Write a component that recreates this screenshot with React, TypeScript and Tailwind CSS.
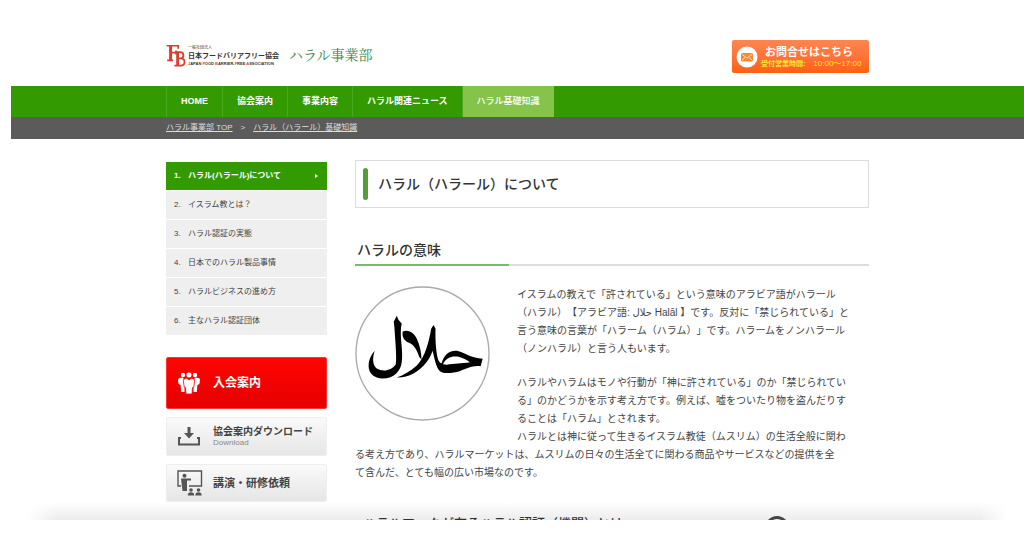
import React from "react";

const navItems = [
  { label: "HOME", active: false },
  { label: "協会案内", active: false },
  { label: "事業内容", active: false },
  { label: "ハラル関連ニュース", active: false },
  { label: "ハラル基礎知識", active: true },
];

const sideItems = [
  "ハラル(ハラール)について",
  "イスラム教とは？",
  "ハラル認証の実態",
  "日本でのハラル製品事情",
  "ハラルビジネスの進め方",
  "主なハラル認証団体",
];

function Initial({ children }: { children: React.ReactNode }) {
  return <span className="text-[#e0402c]">{children}</span>;
}

function Logo() {
  return (
    <a href="#" className="flex items-center text-[#333]">
      <svg viewBox="0 0 20 24" className="h-6 w-5" aria-hidden="true">
        <g fill="none" stroke="#d9402c">
          <path strokeWidth="3" d="M4.6 2v14" />
          <path strokeWidth="1.6" d="M.6 1.8h11.6v3M1.2 16.4h6M5 8.6h5M10 6.6v4" />
          <path strokeWidth="2.8" d="M11.6 8.6v13" />
          <path
            strokeWidth="1.8"
            d="M9 8.2h5.4c4 0 4 6 0 6.2h-3 3.400c5 0 5 7 0 7.200H8.400"
          />
        </g>
      </svg>
      <span className="ml-0.5 flex flex-col">
        <span className="text-[4px] leading-[5px]">一般社団法人</span>
        <span className="text-[7px] leading-[11px] font-bold whitespace-nowrap">
          日本フードバリアフリー協会
        </span>
        <span className="text-[4px] leading-[6px] font-bold whitespace-nowrap">
          <Initial>J</Initial>APAN <Initial>F</Initial>OOD <Initial>B</Initial>ARRIER-
          <Initial>F</Initial>REE <Initial>A</Initial>SSOCIATION
        </span>
      </span>
    </a>
  );
}

function PeopleIcon() {
  return (
    <svg viewBox="0 0 24 24" className="size-6" fill="#fff" aria-hidden="true">
      <circle cx="6" cy="4" r="2.200" />
      <circle cx="18" cy="4" r="2.200" />
      <path d="M1 9c0-2 2-2.600 5-2.600l1.500 4V21H4.200L3.600 14 1.600 13zM23 9c0-2-2-2.600-5-2.600l-1.500 4V21h3.300l.6-7 2-1z" />
      <g stroke="#f00" strokeWidth=".8">
        <circle cx="12" cy="4" r="3" />
        <path d="M6.400 10c0-2 2-2.800 3.400-2.800L12 9l2.200-1.800c1.400 0 3.400.8 3.400 2.800l-.8 6-1.300.6-.5 6.400H9l-.5-6.400-1.300-.6z" />
      </g>
    </svg>
  );
}

function DownloadIcon() {
  return (
    <svg viewBox="0 0 24 24" className="size-6" aria-hidden="true">
      <path d="M10.500 2h3v6H17l-5 5.500L7 8h3.500z" fill="#555" />
      <path d="M4 13H2v6.500h20V13h-2" fill="none" stroke="#555" strokeWidth="2" />
    </svg>
  );
}

function LectureIcon() {
  return (
    <svg viewBox="0 0 26 28" className="h-7 w-[26px]" fill="#555" aria-hidden="true">
      <path d="M4 17H1V2h23.500v15H12" fill="none" stroke="#555" strokeWidth="1.400" />
      <circle cx="7.500" cy="6.800" r="2" />
      <path d="M4 9.500h10v2H10V22H5.500z" />
      <circle cx="14" cy="21" r="1.800" />
      <circle cx="21.500" cy="21" r="1.800" />
      <path d="M10.800 26.500c0-2.500 1-3.200 3.200-3.200s3.200.7 3.200 3.200zM18.300 26.500c0-2.500 1-3.200 3.200-3.200s3.200.7 3.200 3.200z" />
    </svg>
  );
}

function HalalMark() {
  return (
    <svg
      viewBox="30 32 404 404"
      className="float-left mr-[27px] mb-3 size-[135px]"
      role="img"
      aria-label="حلال"
    >
      <circle cx="232" cy="234" r="199" fill="#fff" stroke="#aaa" strokeWidth="4" />
      <path d="M155 121 160 133 170 145C166 158 167 180 169 205C173 248 173 275 155 292C135 313 95 315 78 294C65 277 70 247 89 226C82 248 82 268 95 279C114 290 140 285 152 266C156 250 150 190 148 156L146 139Z" />
      <path d="M173 168C188 162 206 170 215 190C224 210 229 230 229 253L222 244C216 225 208 208 190 201C176 195 170 182 173 168Z" />
      <path
        fillRule="evenodd"
        d="M155 306C175 299 196 287 215 270C240 246 252 195 258 160L265 149 271 160C270 190 272 225 278 250C282 262 287 265 290 262C296 240 310 224 335 226C355 231 380 248 412 250L406 272C380 269 365 279 345 286C320 294 295 295 284 287C272 276 268 248 262 226C255 250 235 278 205 294C190 302 170 307 155 306ZM293 266C302 247 320 240 340 244C352 247 365 254 374 260C350 265 325 262 305 268Z"
      />
    </svg>
  );
}

export default function App() {
  return (
    <div className="bg-white pl-[11px] font-['Liberation_Sans','Noto_Sans_CJK_JP',sans-serif] text-[#444] [text-spacing-trim:space-all]">
      <header>
        <div className="mx-auto flex w-full max-w-[703px] items-start justify-between pt-10 pb-[13px]">
          <div className="flex items-center gap-2.5 pt-1">
            <Logo />
            <span className="font-['Liberation_Serif','Noto_Serif_CJK_JP','Noto_Sans_CJK_JP',serif] text-[14px] leading-6 text-[#3c8550]">
              ハラル事業部
            </span>
          </div>
          <a
            href="#"
            className="flex h-[33px] w-[137px] items-center gap-[3px] rounded-[2px] bg-linear-to-b from-[#ff8550] to-[#ff6010] pl-1 text-white"
          >
            <svg viewBox="0 0 22 22" className="size-[22px] shrink-0" aria-hidden="true">
              <circle cx="11" cy="11" r="10.500" fill="#fff" />
              <rect x="5" y="7" width="12" height="8.500" rx="1.500" fill="#f58a35" />
              <path d="m6 8.500 5 3.500 5-3.500M6 14l3-2.500M16 14l-3-2.500" fill="none" stroke="#ffe3c8" />
            </svg>
            <span className="flex flex-col whitespace-nowrap">
              <span className="pl-1 text-[11px] leading-[14px] font-bold">お問合せはこちら</span>
              <span className="flex gap-2 text-[#ffe633]">
                <span className="text-[7px] leading-[10px] font-bold">受付営業時間:</span>
                <span className="text-[8px] leading-[10px]">10:00〜17:00</span>
              </span>
            </span>
          </a>
        </div>
      </header>

      <nav className="bg-[#339a02]">
        <ul className="mx-auto flex w-full max-w-[703px]">
          {navItems.map((item) => (
            <li key={item.label} className="border-l border-[#4aa81e]">
              <a
                href="#"
                className={
                  item.active
                    ? "block bg-[#86c34b] px-3.5 text-[9px] leading-[31px] font-medium text-white"
                    : "block px-3.5 text-[9px] leading-[31px] font-bold text-white"
                }
              >
                {item.label}
              </a>
            </li>
          ))}
        </ul>
      </nav>

      <div className="bg-[#5b5b5b]">
        <div className="mx-auto flex w-full max-w-[703px] gap-2 text-[8px] leading-[22px] text-[#ddd]">
          <a href="#" className="underline">ハラル事業部 TOP</a>
          <span>&gt;</span>
          <a href="#" className="underline">ハラル（ハラール）基礎知識</a>
        </div>
      </div>

      <div className="relative">
        <div className="absolute inset-x-4 bottom-0 h-[18px] bg-linear-to-b from-white to-[#ececec] mask-x-from-97%" />
        <div className="relative mx-auto flex w-full max-w-[703px] gap-[28px] pt-[21px]">
          <aside className="w-[161px] shrink-0 pt-0.5">
            <ul className="flex flex-col gap-px text-[8px] leading-7">
              {sideItems.map((item, i) => (
                <li key={item}>
                  <a
                    href="#"
                    className={
                      i === 0
                        ? "flex bg-[#339a02] px-2 font-bold text-white"
                        : "flex bg-[#efefef] px-2"
                    }
                  >
                    <span className="w-3.5">{i + 1}.</span>
                    <span className="grow">{item}</span>
                    {i === 0 && (
                      <svg viewBox="0 0 4 6" className="mt-[11px] h-1.5 w-1" aria-hidden="true">
                        <path d="M0 1l3 2-3 2z" fill="#fff" />
                      </svg>
                    )}
                  </a>
                </li>
              ))}
            </ul>
            <div className="mt-[22px] flex flex-col gap-2 font-bold">
              <a
                href="#"
                className="flex h-[52px] items-center gap-3 rounded-[2px] border border-[#f33] bg-linear-to-b from-[#ff0500] to-[#e60000] pl-2.5 text-[12px] text-white"
              >
                <PeopleIcon />
                入会案内
              </a>
              <a
                href="#"
                className="flex h-[39px] items-center gap-3 rounded-[2px] border border-[#eee] bg-linear-to-b from-[#fafafa] to-[#e6e6e6] pl-2.5"
              >
                <DownloadIcon />
                <span className="flex flex-col">
                  <span className="text-[10px] leading-3">協会案内ダウンロード</span>
                  <span className="text-[8px] leading-[9px] font-normal text-[#888]">Download</span>
                </span>
              </a>
              <a
                href="#"
                className="flex h-[38px] items-center gap-2.5 rounded-[2px] border border-[#eee] bg-linear-to-b from-[#fafafa] to-[#e6e6e6] pl-2.5 text-[11px]"
              >
                <LectureIcon />
                講演・研修依頼
              </a>
            </div>
          </aside>

          <main className="min-w-0 grow">
            <div className="flex h-12 items-center gap-2.5 border border-[#ddd] pl-[7px]">
              <span className="h-8 w-[5px] rounded-full bg-[#549d38]" />
              <h1 className="text-[14px] leading-5 font-medium text-[#333]">
                ハラル（ハラール）について
              </h1>
            </div>
            <h2 className="mt-[30px] mb-0.5 pl-0.5 text-[14px] leading-6 font-medium text-[#333]">
              ハラルの意味
            </h2>
            <div className="flex h-0.5 bg-[#ddd]">
              <span className="w-[30%] bg-[#76bd69]" />
            </div>
            <div className="pt-5 text-[10px] leading-[18px]">
              <HalalMark />
              <p>
                イスラムの教えで「許されている」という意味のアラビア語がハラール
                <br />
                （ハラル）【アラビア語: <span lang="ar" className="font-['DejaVu_Sans',sans-serif] leading-3">حلال</span> Halāl 】です。反対に「禁じられている」と
                <br />
                言う意味の言葉が「ハラーム（ハラム）」です。ハラームをノンハラール
                <br />
                （ノンハラル）と言う人もいます。
              </p>
              <p className="mt-4">
                ハラルやハラムはモノや行動が「神に許されている」のか「禁じられてい
                <br />
                る」のかどうかを示す考え方です。例えば、嘘をついたり物を盗んだりす
                <br />
                ることは「ハラム」とされます。
                <br />
                ハラルとは神に従って生きるイスラム教徒（ムスリム）の生活全般に関わ
                <br />
                る考え方であり、ハラルマーケットは、ムスリムの日々の生活全てに関わる商品やサービスなどの提供を全
                <br />
                て含んだ、とても幅の広い市場なのです。
              </p>
            </div>
            <div className="mt-[34px] flex h-1 items-start justify-between overflow-hidden pr-20 pl-2">
              <h2 className="text-[13px] leading-4 font-medium text-[#333]">
                ハラルマークが有るハラル認証（機関）とは
              </h2>
              <svg viewBox="0 0 24 24" className="size-6" aria-hidden="true">
                <circle cx="12" cy="12" r="10.500" fill="none" stroke="#444" strokeWidth="3" />
              </svg>
            </div>
          </main>
        </div>
      </div>
    </div>
  );
}
